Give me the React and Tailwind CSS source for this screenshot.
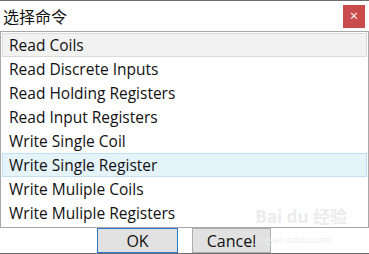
export default function App() {
  const items = [
    "Read Coils",
    "Read Discrete Inputs",
    "Read Holding Registers",
    "Read Input Registers",
    "Write Single Coil",
    "Write Single Register",
    "Write Muliple Coils",
    "Write Muliple Registers",
  ];
  const font = { fontFamily: '"Open Sans", "Noto Sans CJK SC", sans-serif' };
  return (
    <div
      className="relative w-[369px] h-[254px] bg-white border-t border-b border-[#6e6e6e] flex flex-col overflow-hidden text-[#111]"
      style={font}
    >
      <div className="h-[30px] flex items-center justify-between pl-[3px] pr-[4px]">
        <span className="text-[16px] leading-none mt-[2px]">选择命令</span>
        <div className="w-[22px] h-[23px] mt-[1px] bg-[#c94b4b] flex items-center justify-center text-white text-[14px] leading-none">
          ×
        </div>
      </div>
      <div className="h-[198px] border border-[#a8a8a8] p-[1px] flex flex-col">
        {items.map((t, i) => (
          <div
            key={t}
            className={
              "h-[24px] shrink-0 flex items-center pl-[6px] pt-[1px] text-[15.5px] leading-none border " +
              (i === 0
                ? "bg-[#f2f2f2] border-[#dadada]"
                : i === 5
                ? "bg-[#e5f3fb] border-[#c3dff0]"
                : "border-transparent")
            }
          >
            {t}
          </div>
        ))}
      </div>
      <div className="flex-1 flex items-start pl-[97px] gap-[14px]">
        <div className="w-[81px] h-[25px] bg-[#e1e1e1] border border-[#2a78c8] flex items-center justify-center text-[16px] leading-none">
          OK
        </div>
        <div className="w-[79px] h-[25px] bg-[#e1e1e1] border border-[#adadad] flex items-center justify-center text-[16px] leading-none">
          Cancel
        </div>
      </div>
      <div className="absolute right-[22px] bottom-[28px] text-[#ececec] text-[17px] leading-none font-bold pointer-events-none">
        Bai du 经验
      </div>
      <div className="absolute right-[38px] bottom-[9px] text-[#ededed] text-[9px] leading-none pointer-events-none">
        jingyan.baidu.com
      </div>
    </div>
  );
}
